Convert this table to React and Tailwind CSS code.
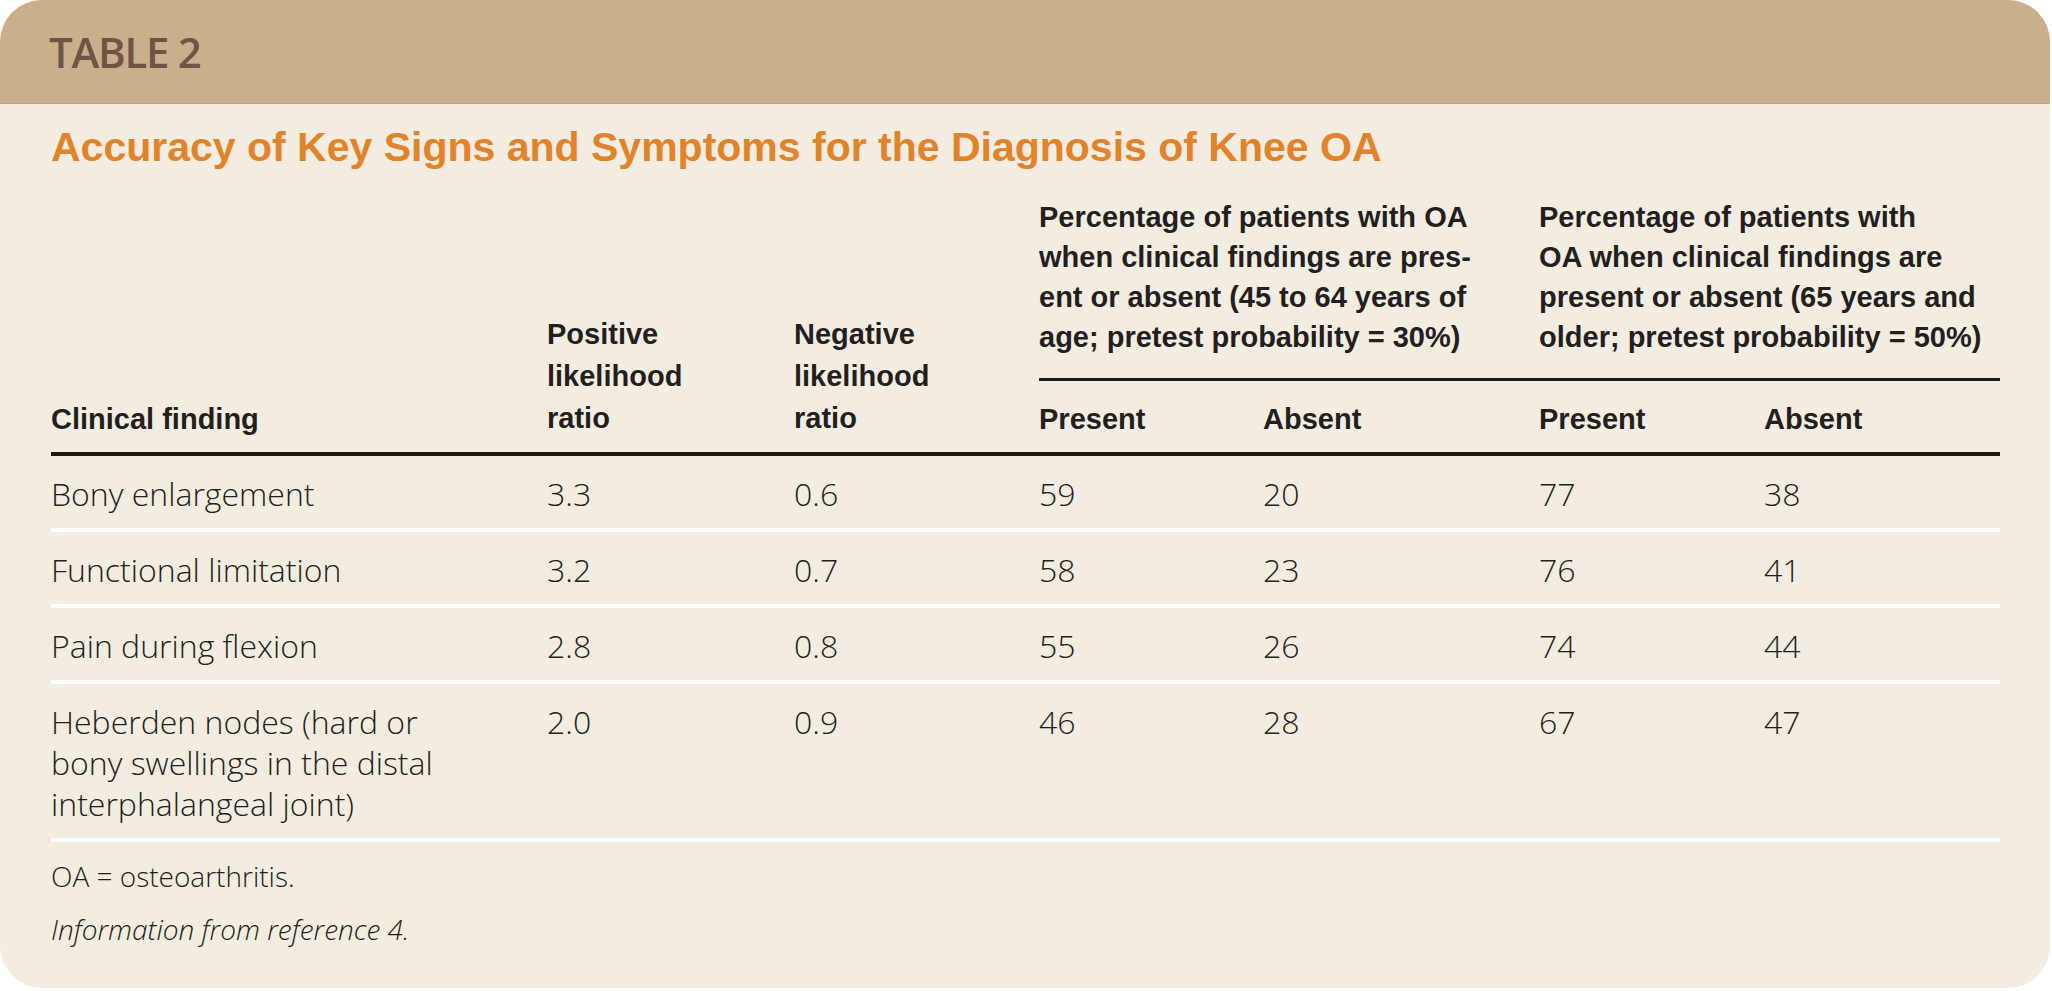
const groups = [
  ['Percentage of patients with OA', 'when clinical findings are pres-', 'ent or absent (45 to 64 years of', 'age; pretest probability = 30%)'],
  ['Percentage of patients with', 'OA when clinical findings are', 'present or absent (65 years and', 'older; pretest probability = 50%)'],
];

const rows = [
  { finding: ['Bony enlargement'], values: ['3.3', '0.6', '59', '20', '77', '38'] },
  { finding: ['Functional limitation'], values: ['3.2', '0.7', '58', '23', '76', '41'] },
  { finding: ['Pain during flexion'], values: ['2.8', '0.8', '55', '26', '74', '44'] },
  {
    finding: ['Heberden nodes (hard or', 'bony swellings in the distal', 'interphalangeal joint)'],
    values: ['2.0', '0.9', '46', '28', '67', '47'],
  },
];

function Lines({ lines }) {
  return lines.map((line) => (
    <span key={line} className="block whitespace-nowrap">
      {line}
    </span>
  ));
}

export default function App() {
  return (
    <div className="min-h-screen bg-white">
      <div className="w-[2050px] h-[988px] rounded-[42px] overflow-hidden bg-[#f3ece0] flex flex-col">
        {/* Band */}
        <div className="h-[104px] shrink-0 bg-[#c9b08c] border-b border-[#bfa57f] px-[49px] pt-[31px]">
          <h1 className="font-['Open_Sans',sans-serif] font-semibold text-[42px] leading-[42px] tracking-[-0.03em] text-[#6e5546]">
            TABLE 2
          </h1>
        </div>

        <div className="px-[51px] pt-[19px]">
          <h2 className="font-['Liberation_Sans',Arial,sans-serif] font-bold text-[41px] leading-[49px] text-[#e0832a]">
            Accuracy of Key Signs and Symptoms for the Diagnosis of Knee OA
          </h2>

          <table className="mt-[25px] w-[1949px] table-fixed border-collapse text-left text-[#231f20]">
            <colgroup>
              <col className="w-[496px]" />
              <col className="w-[247px]" />
              <col className="w-[245px]" />
              <col className="w-[224px]" />
              <col className="w-[276px]" />
              <col className="w-[225px]" />
              <col className="w-[236px]" />
            </colgroup>
            <thead className="font-['Liberation_Sans',Arial,sans-serif] font-bold text-[29px]">
              <tr>
                <th rowSpan={2} className="p-0 pb-[13px] align-bottom leading-[40px] border-b-4 border-[#1a1a1a]">
                  Clinical finding
                </th>
                <th rowSpan={2} className="p-0 pb-[13px] align-bottom leading-[42px] border-b-4 border-[#1a1a1a]">
                  <Lines lines={['Positive', 'likelihood', 'ratio']} />
                </th>
                <th rowSpan={2} className="p-0 pb-[13px] align-bottom leading-[42px] border-b-4 border-[#1a1a1a]">
                  <Lines lines={['Negative', 'likelihood', 'ratio']} />
                </th>
                {groups.map((g, i) => (
                  <th key={i} colSpan={2} className="p-0 pb-[21px] align-bottom leading-[40px] border-b-[3px] border-[#1a1a1a]">
                    <Lines lines={g} />
                  </th>
                ))}
              </tr>
              <tr>
                {['Present', 'Absent', 'Present', 'Absent'].map((label, i) => (
                  <th key={i} className="p-0 pt-[18px] pb-[13px] align-bottom leading-[40px] border-b-4 border-[#1a1a1a]">
                    {label}
                  </th>
                ))}
              </tr>
            </thead>
            <tbody className="font-['Open_Sans',sans-serif] font-light text-[32px] leading-[41px]">
              {rows.map((row, i) => (
                <tr key={i} className="border-b-4 border-white">
                  <td className="p-0 pt-[17px] pb-[14px] align-top">
                    <Lines lines={row.finding} />
                  </td>
                  {row.values.map((v, j) => (
                    <td key={j} className="p-0 pt-[17px] pb-[14px] align-top">
                      {v}
                    </td>
                  ))}
                </tr>
              ))}
            </tbody>
          </table>

          <div className="font-['Open_Sans',sans-serif] font-light text-[28px] leading-[36px] text-[#231f20]">
            <p className="mt-[16px]">OA = osteoarthritis.</p>
            <p className="mt-[17px] italic">Information from reference 4.</p>
          </div>
        </div>
      </div>
    </div>
  );
}
